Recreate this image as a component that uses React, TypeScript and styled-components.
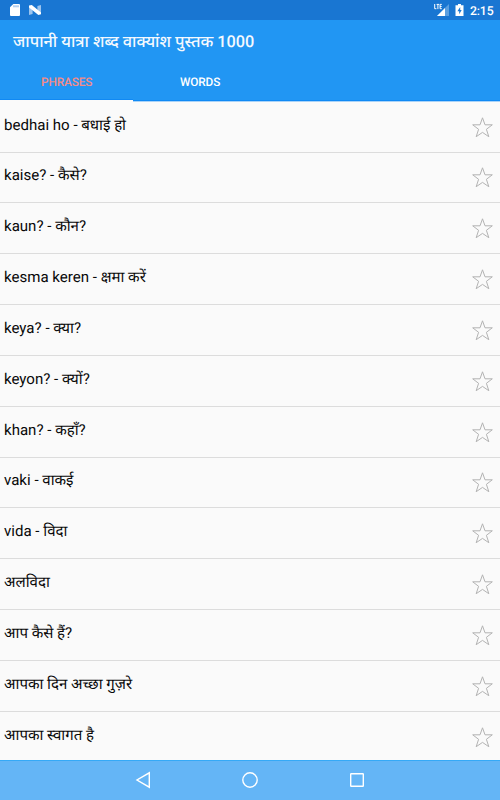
import React from 'react';
import styled, { createGlobalStyle } from 'styled-components';

const Global = createGlobalStyle`
  * { box-sizing: border-box; }
  body {
    margin: 0;
    font-family: Roboto, "Noto Sans Devanagari", "Noto Sans", sans-serif;
    text-rendering: geometricPrecision;
  }
`;

const Screen = styled.div`
  display: flex;
  flex-direction: column;
  width: 500px;
  height: 800px;
  overflow: hidden;
  background: #fafafa;
`;

const StatusBar = styled.div`
  flex: none;
  height: 20px;
  display: flex;
  align-items: center;
  justify-content: space-between;
  padding: 0 6.5px 0 9px;
  background: #1976d2;
  color: #fff;
`;

const StatusGroup = styled.div<{ $gap: number }>`
  display: flex;
  align-items: center;
  gap: ${(p) => p.$gap}px;
`;

const Clock = styled.span`
  font-size: 12.2px;
  font-weight: 500;
  line-height: 20px;
  letter-spacing: -0.1px;
  padding-top: 1px;
`;

const Icon = styled.svg`
  display: block;
  flex: none;
`;

const Header = styled.header`
  flex: none;
  height: 81px;
  background: #2196f3;
  border-bottom: 1px solid #1089f4;
  box-shadow: 0 1px #a9d3f8;
`;

const Title = styled.h1`
  margin: 0;
  padding: 1px 0 0 13px;
  height: 44px;
  line-height: 42px;
  font-size: 16.3px;
  font-weight: 500;
  color: #f4f9fe;
  white-space: nowrap;
`;

const Tabs = styled.nav`
  display: flex;
  height: 36px;
`;

const Tab = styled.div<{ $active?: boolean }>`
  width: 133.4px;
  height: ${(p) => (p.$active ? 35 : 36)}px;
  line-height: 37px;
  text-align: center;
  font-size: 11.8px;
  font-weight: 500;
  letter-spacing: -0.1px;
  color: ${(p) => (p.$active ? '#f58b86' : '#fff')};
  box-shadow: ${(p) => (p.$active ? '0 1px #1089f4, 0 3px #fafafa' : 'none')};
`;

const List = styled.ul`
  flex: 1;
  min-height: 0;
  margin: 0;
  padding: 0.75px 0 0;
  list-style: none;
  overflow: hidden;
`;

const Row = styled.li`
  display: flex;
  align-items: center;
  justify-content: space-between;
  height: 50.83px;
  padding: 0 7px 0 4px;
  border-bottom: 1px solid #dcdcdc;
  color: #080808;
`;

const Phrase = styled.span`
  font-size: 15.05px;
  line-height: 24px;
  padding-bottom: 4px;
  white-space: nowrap;
`;

const NavBar = styled.div`
  flex: none;
  height: 40px;
  display: flex;
  align-items: center;
  justify-content: center;
  gap: 82.5px;
  padding-bottom: 1px;
  background: #64b5f6;
  border-top: 1px solid #35a9f7;
`;

const phrases = [
  'bedhai ho - बधाई हो',
  'kaise? - कैसे?',
  'kaun? - कौन?',
  'kesma keren - क्षमा करें',
  'keya? - क्या?',
  'keyon? - क्यों?',
  'khan? - कहाँ?',
  'vaki - वाकई',
  'vida - विदा',
  'अलविदा',
  'आप कैसे हैं?',
  'आपका दिन अच्छा गुज़रे',
  'आपका स्वागत है',
];

const SdCard = () => (
  <Icon width="12" height="14" viewBox="0 0 12 14">
    <path d="M4.3 1H10a1 1 0 0 1 1 1v10a1 1 0 0 1-1 1H2a1 1 0 0 1-1-1V4.3z" fill="#fff" />
    <path d="M5 2.3v2M7 2.3v2M9 2.3v2" stroke="#5b97dc" strokeWidth=".9" />
  </Icon>
);

const Nougat = () => (
  <Icon width="12" height="12" viewBox="0 0 12 12">
    <path d="M0 2l3.6 1v7L0 11zM8.4 2L12 1v9l-3.6-1z" fill="#9cc4ee" />
    <path d="M0 1.6L2.8 1 12 8.6v1.6l-2.6.8L0 3.6z" fill="#fff" />
  </Icon>
);

const Signal = () => (
  <Icon width="16" height="14" viewBox="0 0 16 14">
    <path d="M15 1v12H3z" fill="#5c9fe0" />
    <path d="M11 5v8H3z" fill="#fff" />
    <path
      d="M.7 1v4.7h1.7M2.6 1.4h2.6M3.9 1.4v4.7M7.8 1.4H6.1v4.3h1.7M6.1 3.5h1.5"
      fill="none"
      stroke="#fff"
      strokeWidth="1"
    />
  </Icon>
);

const Battery = () => (
  <Icon width="9" height="14" viewBox="0 0 9 14">
    <path d="M3 1h3v1.2h2.5v10.8H.5V2.2H3z" fill="#fff" />
    <path d="M5.2 4L2.4 8.2h1.8v3L6.7 7H5.2z" fill="#1976d2" />
  </Icon>
);

const Star = () => (
  <Icon width="22" height="22" viewBox="-0.5 -0.5 22 22">
    <path
      d="M11 1.3l2.5 7h7.3l-5.9 4.5 2.4 7.4L11 15.9l-6.3 4.3 2.4-7.4L1.2 8.3h7.3z"
      fill="none"
      stroke="#b3b3b3"
      strokeWidth="1"
    />
  </Icon>
);

export default function App() {
  return (
    <>
      <Global />
      <Screen>
        <StatusBar>
          <StatusGroup $gap={8}>
            <SdCard />
            <Nougat />
          </StatusGroup>
          <StatusGroup $gap={5.5}>
            <Signal />
            <Battery />
            <Clock>2:15</Clock>
          </StatusGroup>
        </StatusBar>
        <Header>
          <Title>जापानी यात्रा शब्द वाक्यांश पुस्तक 1000</Title>
          <Tabs>
            <Tab $active>PHRASES</Tab>
            <Tab>WORDS</Tab>
          </Tabs>
        </Header>
        <List>
          {phrases.map((text) => (
            <Row key={text}>
              <Phrase>{text}</Phrase>
              <Star />
            </Row>
          ))}
        </List>
        <NavBar>
          <Icon width="24" height="24" viewBox="0 0 24 24">
            <path d="M17.3 4.8v14.4L5 12z" fill="none" stroke="#fff" strokeWidth="1.4" />
          </Icon>
          <Icon width="24" height="24" viewBox="0 0 24 24">
            <circle cx="12" cy="12" r="7.2" fill="none" stroke="#fff" strokeWidth="1.4" />
          </Icon>
          <Icon width="24" height="24" viewBox="0 0 24 24">
            <rect x="5.7" y="5.7" width="12.6" height="12.6" rx=".5" fill="none" stroke="#fff" strokeWidth="1.4" />
          </Icon>
        </NavBar>
      </Screen>
    </>
  );
}
